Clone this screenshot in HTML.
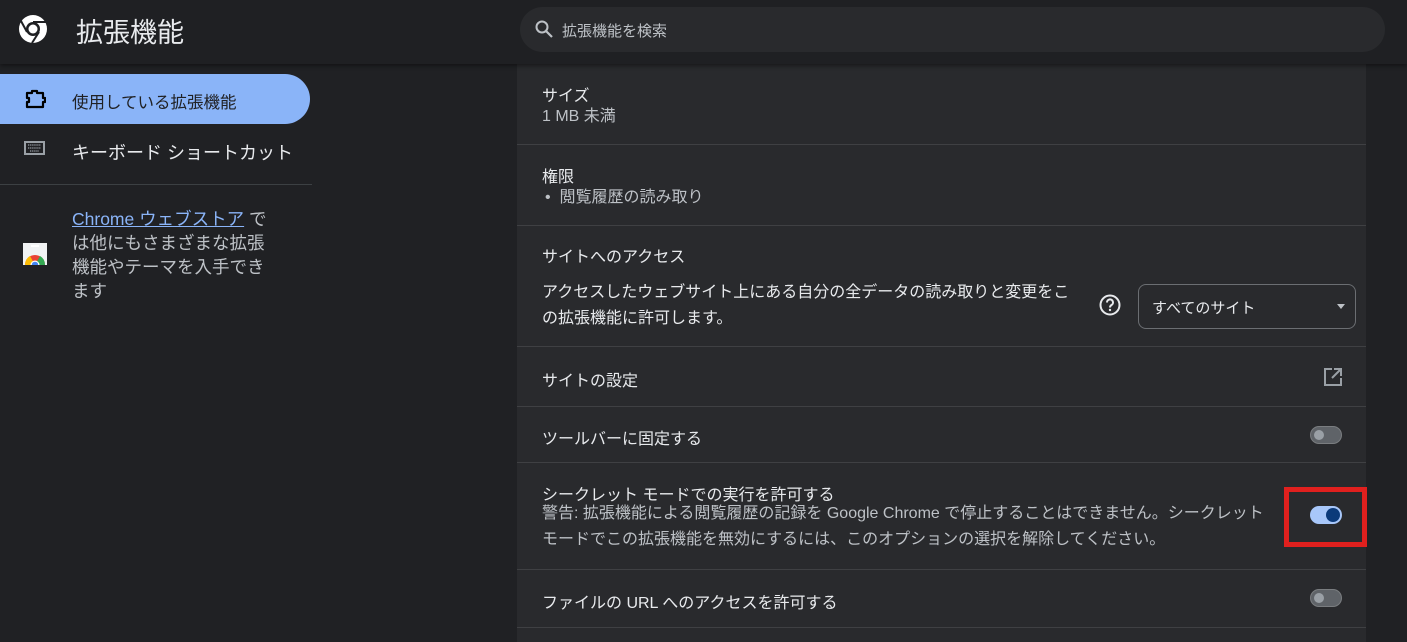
<!DOCTYPE html>
<html><head><meta charset="utf-8"><style>
*{margin:0;padding:0;box-sizing:border-box}
body{width:1407px;height:642px;overflow:hidden;background:#202124;font-family:"Liberation Sans","Noto Sans CJK JP",sans-serif;color:#e8eaed;position:relative}
.hdr{position:absolute;left:0;top:0;width:1407px;height:64px;background:#1f2023;box-shadow:0 2px 4px rgba(0,0,0,.4);z-index:2}
.title{position:absolute;left:76px;top:11px;font-size:27px;color:#e8eaed}
.search{position:absolute;left:520px;top:7px;width:865px;height:45px;border-radius:23px;background:#292a2d}
.search span{position:absolute;left:42px;top:13px;font-size:15px;color:#bdc1c6}
.nav1{position:absolute;left:0;top:74px;width:310px;height:50px;background:#8ab4f8;border-radius:0 25px 25px 0}
.nav1 span{position:absolute;left:72px;top:15px;font-size:16.5px;color:#202124}
.nav2{position:absolute;left:72px;top:139px;font-size:18px;color:#e8eaed}
.sep{position:absolute;left:0;top:184px;width:312px;height:1px;background:#3c4043}
.store{position:absolute;left:72px;top:207px;width:198px;font-size:17.5px;line-height:24px;color:#bdc1c6}
.store a{color:#8ab4f8;text-decoration:underline}
.card{position:absolute;left:517px;top:64px;width:849px;height:578px;background:#292a2d}
.row{position:absolute;left:0;width:849px;border-bottom:1px solid #3f4043}
.t{position:absolute;left:25px;font-size:16px;color:#e8eaed}
.s{position:absolute;left:25px;font-size:16px;color:#bdc1c6;line-height:26px}
.tog{position:absolute;left:793px;width:32px;height:18px;border-radius:9px;background:#5f6368;border:1px solid #7a7d80}
.tog:after{content:"";position:absolute;left:3px;top:3px;width:10px;height:10px;border-radius:50%;background:#9aa0a6}
.on{background:#a8c7fa;border:none}
.on:after{left:16px;top:2px;width:14px;height:14px;background:#0b3a7a}
</style></head><body>
<div class="hdr">
<svg style="position:absolute;left:18px;top:14px" width="30" height="30" viewBox="0 0 30 30"><circle cx="15" cy="15" r="14" fill="#fff"/><circle cx="15" cy="15" r="7" fill="#1f2023"/><circle cx="15" cy="15" r="4.5" fill="#fff"/><path d="M15 8 L28 8" stroke="#1f2023" stroke-width="2"/><path d="M9 18 L3 7" stroke="#1f2023" stroke-width="2"/><path d="M21 18 L14 29" stroke="#1f2023" stroke-width="2"/></svg>
<div class="title">拡張機能</div>
<div class="search"><svg style="position:absolute;left:14px;top:12px" width="20" height="20" viewBox="0 0 20 20"><circle cx="8" cy="8" r="5.5" fill="none" stroke="#bdc1c6" stroke-width="2"/><path d="M12 12 L18 18" stroke="#bdc1c6" stroke-width="2.2"/></svg><span>拡張機能を検索</span></div>
</div>
<div class="nav1"><svg style="position:absolute;left:24px;top:14px" width="22" height="22" viewBox="0 0 22 22"><path d="M3 5 H8 V3 H13 V5 H19 V10 H21 V14 H19 V19 H3 V14 H5 V10 H3 Z" fill="none" stroke="#000" stroke-width="2.2" stroke-linejoin="round"/></svg><span>使用している拡張機能</span></div>
<svg style="position:absolute;left:24px;top:141px" width="21" height="14" viewBox="0 0 21 14"><rect x="1" y="1" width="19" height="12" fill="none" stroke="#9aa0a6" stroke-width="2"/><path d="M4 4h13M4 7h13M6 10h9" stroke="#9aa0a6" stroke-width="1.3" stroke-dasharray="1.3 .8"/></svg>
<div class="nav2">キーボード ショートカット</div>
<div class="sep"></div>
<svg style="position:absolute;left:23px;top:243px" width="24" height="22" viewBox="0 0 24 22"><rect x="0" y="0" width="24" height="22" fill="#f1f3f4"/><rect x="8" y="2" width="8" height="2" fill="#fff"/><path d="M2 22 A10 10 0 0 1 22 22Z" fill="#ea4335"/><path d="M2 22 A10 10 0 0 1 7 13 L12 22Z" fill="#fbbc04"/><path d="M12 22 L17 13 A10 10 0 0 1 22 22Z" fill="#34a853"/><circle cx="12" cy="22" r="4.5" fill="#fff"/><circle cx="12" cy="22" r="3.3" fill="#4285f4"/></svg>
<div class="store"><a>Chrome ウェブストア</a> で<br>は他にもさまざまな拡張<br>機能やテーマを入手でき<br>ます</div>
<div class="card">
<div class="row" style="top:0;height:81px"><div class="t" style="top:18px">サイズ</div><div class="s" style="top:40px">1 MB 未満</div></div>
<div class="row" style="top:81px;height:81px"><div class="t" style="top:18px">権限</div><div class="s" style="top:40px;left:28px">•&nbsp;&nbsp;閲覧履歴の読み取り</div></div>
<div class="row" style="top:162px;height:121px"><div class="t" style="top:17px">サイトへのアクセス</div><div class="s" style="top:54px;width:580px;color:#e8eaed">アクセスしたウェブサイト上にある自分の全データの読み取りと変更をこ<br>の拡張機能に許可します。</div>
<svg style="position:absolute;left:582px;top:68px" width="22" height="22" viewBox="0 0 22 22"><circle cx="11" cy="11" r="9.5" fill="none" stroke="#e8eaed" stroke-width="2"/><path d="M8 8.5a3 3 0 1 1 4.5 2.5c-1 .6-1.5 1.2-1.5 2.5" fill="none" stroke="#e8eaed" stroke-width="2"/><circle cx="11" cy="16" r="1.2" fill="#e8eaed"/></svg>
<div style="position:absolute;left:621px;top:58px;width:218px;height:45px;border:1px solid #6b6e72;border-radius:8px"><span style="position:absolute;left:13px;top:12px;font-size:15px;color:#e8eaed">すべてのサイト</span><span style="position:absolute;right:10px;top:19px;border:4px solid transparent;border-top:5px solid #bdc1c6"></span></div></div>
<div class="row" style="top:283px;height:60px"><div class="t" style="top:20px">サイトの設定</div><svg style="position:absolute;left:806px;top:20px" width="20" height="20" viewBox="0 0 20 20"><path d="M9 2H2V18H18V11" fill="none" stroke="#9aa0a6" stroke-width="2"/><path d="M11 2H18V9M18 2L9 11" fill="none" stroke="#9aa0a6" stroke-width="2"/></svg></div>
<div class="row" style="top:343px;height:56px"><div class="t" style="top:18px">ツールバーに固定する</div><div class="tog" style="top:19px"></div></div>
<div class="row" style="top:399px;height:107px"><div class="t" style="top:18px">シークレット モードでの実行を許可する</div><div class="s" style="top:38px;width:780px">警告: 拡張機能による閲覧履歴の記録を Google Chrome で停止することはできません。シークレット<br>モードでこの拡張機能を無効にするには、このオプションの選択を解除してください。</div><div class="tog on" style="top:43px"></div>
<div style="position:absolute;left:767px;top:24px;width:83px;height:60px;border:5px solid #e0201e"></div></div>
<div class="row" style="top:506px;height:58px"><div class="t" style="top:19px">ファイルの URL へのアクセスを許可する</div><div class="tog" style="top:19px"></div></div>
</div>
</body></html>
